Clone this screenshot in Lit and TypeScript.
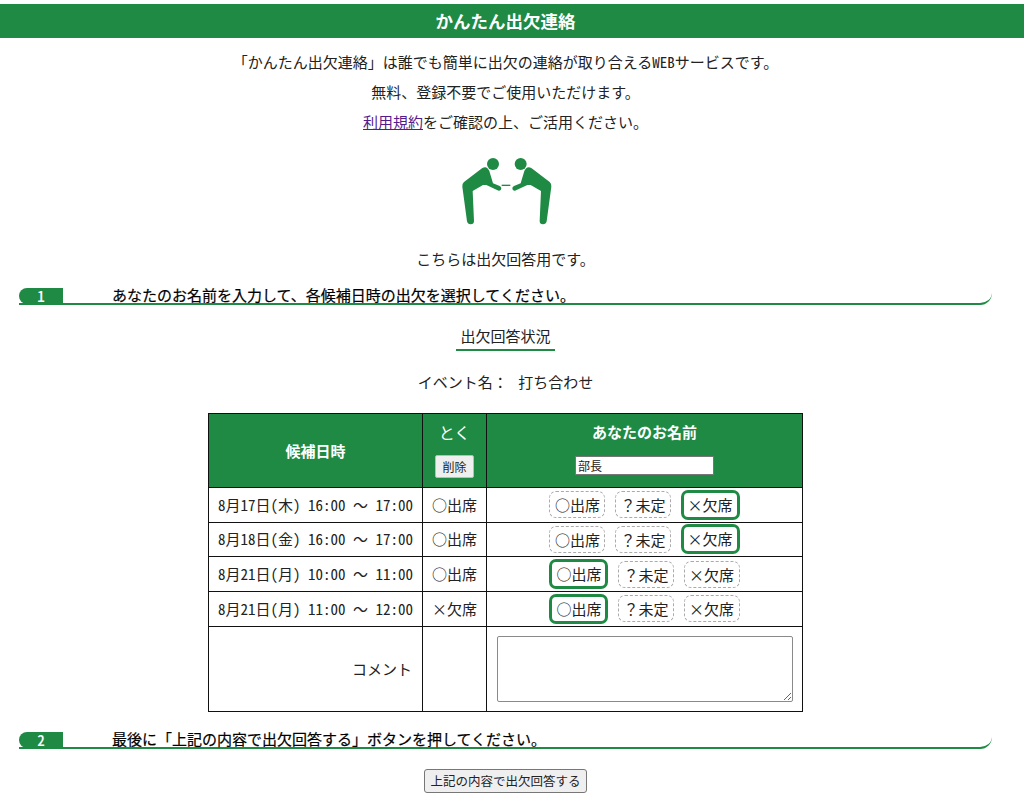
import { LitElement, html, css } from "lit";
import { customElement } from "lit/decorators.js";

const rows: [string, string, string, number][] = [
  ["8月17日(木) 16:00", "17:00", "○出席", 2],
  ["8月18日(金) 16:00", "17:00", "○出席", 2],
  ["8月21日(月) 10:00", "11:00", "○出席", 0],
  ["8月21日(月) 11:00", "12:00", "×欠席", 0],
];
const opts = ["○出席", "？未定", "×欠席"];

@customElement("app-root")
export class AppRoot extends LitElement {
  static styles = css`
    :host { --g: #1e8a44; display: block; width: 1024px; height: 799px; overflow: hidden; background: #fff; color: #222;
      font-family: "Noto Sans CJK JP", "Noto Sans", sans-serif; font-size: 15px; line-height: 20px; font-feature-settings: "hwid"; }
    .fw { font-feature-settings: normal; }
    .top { padding-top: 4px; }
    header { height: 34px; background: var(--g); color: #fff; font-weight: 700; font-size: 17.5px;
      line-height: 34px; text-align: center; padding-right: 13px; }
    main { width: 1011px; text-align: center; }
    .intro p { margin: 0; height: 30px; line-height: 30px; }
    .intro { padding-top: 9px; }
    a { color: #551a8b; text-decoration: underline; }
    .icon { display: block; margin: 8px auto 0; width: 150px; height: 90px; }
    .lead { margin: 14px 0 0; line-height: 20px; }
    .sec { display: flex; align-items: flex-end; margin: 18px 0 0 19px; width: 973px; height: 16px; box-sizing: content-box;
      border-bottom: 2px solid var(--g); border-bottom-right-radius: 12px; text-align: left; }
    .num { width: 44px; height: 16px; margin-bottom: -1px; background: var(--g); color: #fff; font-weight: 500; font-size: 15px; line-height: 16px;
      text-align: center; border-radius: 8px 0 0 8px; flex: none; }
    .sec span.t { margin-left: 49px; color: #000; font-weight: 400; -webkit-text-stroke: 0.2px #000; line-height: 16px; }
    .status { display: inline-block; margin-top: 20px; padding: 0 4px 2px; border-bottom: 2px solid var(--g); line-height: 22px; }
    .event { margin: 21px 0 0; line-height: 20px; }
    .event b { font-weight: 400; margin-left: 3px; }
    table { border-collapse: collapse; margin: 21px auto 0; width: 594px; table-layout: fixed; }
    td, th { border: 1px solid #111; padding: 0; text-align: center; }
    th { background: var(--g); color: #fff; font-weight: 700; }
    .c1 { width: 214px; } .c2 { width: 64px; } .c3 { width: 316px; }
    .r td { height: 33.65px; }
    .h th { height: 73px; }
    .h th.b2 { padding-bottom: 2px; height: 71px; }
    .h th.b3 { padding-bottom: 3px; height: 70px; }
    .tl { font-weight: 700; line-height: 20px; }
    .b2 .tl { margin-bottom: 13px; font-size: 16px; font-weight: 400; }
    .b3 .tl { margin-bottom: 14px; }
    .del { font: 12px "Noto Sans CJK JP", sans-serif; width: 39px; height: 23px; padding: 0; background: #efefef; border: 1px solid #bbb; border-radius: 2px; color: #222; display: block; margin: 0 auto; }
    .name { font: 12px "Noto Sans CJK JP", sans-serif; width: 139px; height: 19px; padding: 0 2px; box-sizing: border-box; border: 1px solid #777; display: inline-block; vertical-align: top; background: #fff; color: #222; }
    .opts { display: flex; justify-content: center; align-items: center; gap: 9.5px; }
    .o { border: 1px dashed #aaa; border-radius: 7px; padding: 0 4.5px; height: 25px; line-height: 25px; box-sizing: content-box; font-feature-settings: normal; }
    .o.on { border: 3px solid var(--g); border-radius: 7px; height: 24px; line-height: 24px; padding: 0 4px; }
    .cm { text-align: right; padding-right: 10px; }
    textarea { display: block; margin: 9px auto 9px 10px; width: 296px; height: 66px; box-sizing: border-box; border: 1px solid #8a8a8a; border-radius: 2px; resize: both; }
    .sec.two { margin-top: 19px; }
    .go { display: block; margin: 20px auto 0; font: 12.5px "Noto Sans CJK JP", sans-serif; width: 163px; height: 24px; padding: 0; background: #efefef; border: 1px solid #777; border-radius: 3px; color: #222; }
  `;

  render() {
    return html`
      <div class="top"><header>かんたん出欠連絡</header></div>
      <main>
        <div class="intro">
          <p>「かんたん出欠連絡」は誰でも簡単に出欠の連絡が取り合えるWEBサービスです。</p>
          <p>無料、登録不要でご使用いただけます。</p>
          <p><a href="#">利用規約</a>をご確認の上、ご活用ください。</p>
        </div>
        <svg class="icon" viewBox="0 0 450 270" aria-hidden="true">
          <g fill="#1e8a44">
            <circle cx="186" cy="57" r="18"></circle>
            <circle cx="269" cy="57" r="18"></circle>
            <rect x="212" y="119" width="26" height="4"></rect>
            <path d="M153 70 L99 111 Q93 116 94 125 L108 229 Q110 238 119 238 Q129 238 129 228 L125 138 L156 120 L166 120 L203 137 Q211 138 211 130 Q211 125 206 123 L186 115 L175 78 Q167 60 153 70 Z"></path>
            <path d="M302 70 L356 111 Q362 116 361 125 L347 229 Q345 238 336 238 Q326 238 326 228 L330 138 L299 120 L289 120 L252 137 Q244 138 244 130 Q244 125 249 123 L269 115 L280 78 Q288 60 302 70 Z"></path>
          </g>
        </svg>
        <p class="lead">こちらは出欠回答用です。</p>
        <div class="sec"><div class="num">1</div><span class="t">あなたのお名前を入力して、各候補日時の出欠を選択してください。</span></div>
        <div class="status">出欠回答状況</div>
        <p class="event">イベント名<span class="fw">：</span> <b>打ち合わせ</b></p>
        <table>
          <colgroup><col class="c1" /><col class="c2" /><col class="c3" /></colgroup>
          <tr class="h">
            <th>候補日時</th>
            <th class="b2"><div class="tl">とく</div><button class="del">削除</button></th>
            <th class="b3"><div class="tl">あなたのお名前</div><input class="name" value="部長" /></th>
          </tr>
          ${rows.map(([d, e, a, sel]) => html`
            <tr class="r">
              <td>${d} <span class="fw">～</span> ${e}</td>
              <td><span class="fw">${a}</span></td>
              <td><div class="opts">${opts.map((o, i) => html`<span class="o ${i === sel ? "on" : ""}">${o}</span>`)}</div></td>
            </tr>`)}
          <tr>
            <td class="cm">コメント</td>
            <td></td>
            <td><textarea></textarea></td>
          </tr>
        </table>
        <div class="sec two"><div class="num">2</div><span class="t">最後に「上記の内容で出欠回答する」ボタンを押してください。</span></div>
        <button class="go">上記の内容で出欠回答する</button>
      </main>
    `;
  }
}
